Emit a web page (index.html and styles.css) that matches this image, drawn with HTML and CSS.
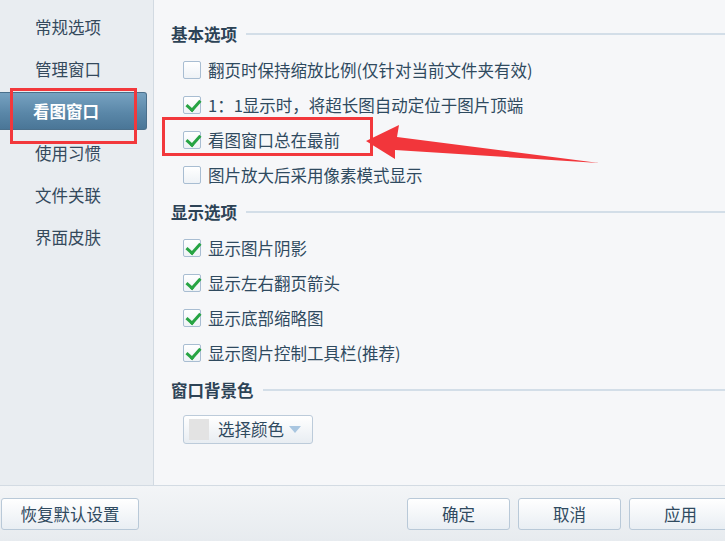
FILE: index.html
```html
<!DOCTYPE html>
<html lang="zh">
<head>
<meta charset="utf-8">
<link rel="stylesheet" href="styles.css">
</head>
<body>
<div class="window">
  <div class="main">
    <nav class="sidebar">
      <div class="nav-item">常规选项</div>
      <div class="nav-item">管理窗口</div>
      <div class="nav-item active">看图窗口</div>
      <div class="nav-item">使用习惯</div>
      <div class="nav-item">文件关联</div>
      <div class="nav-item">界面皮肤</div>
    </nav>
    <section class="content">
      <div class="heading first"><span>基本选项</span><i class="rule"></i></div>
      <div class="opt"><span class="cb"></span>翻页时保持缩放比例(仅针对当前文件夹有效)</div>
      <div class="opt"><span class="cb on"></span>1：1显示时，将超长图自动定位于图片顶端</div>
      <div class="opt"><span class="cb on"></span>看图窗口总在最前</div>
      <div class="opt"><span class="cb"></span>图片放大后采用像素模式显示</div>

      <div class="heading"><span>显示选项</span><i class="rule"></i></div>
      <div class="opt"><span class="cb on"></span>显示图片阴影</div>
      <div class="opt"><span class="cb on"></span>显示左右翻页箭头</div>
      <div class="opt"><span class="cb on"></span>显示底部缩略图</div>
      <div class="opt"><span class="cb on"></span>显示图片控制工具栏(推荐)</div>

      <div class="heading"><span>窗口背景色</span><i class="rule"></i></div>
      <div class="color-row">
        <button class="color-btn"><span class="swatch"></span><span class="color-label">选择颜色</span><span class="tri"></span></button>
      </div>
    </section>
  </div>
  <footer class="bottom">
    <button class="btn reset">恢复默认设置</button>
    <div class="actions">
      <button class="btn">确定</button>
      <button class="btn">取消</button>
      <button class="btn">应用</button>
    </div>
  </footer>

  <div class="mark mark-nav"></div>
  <div class="mark mark-opt"></div>
  <svg class="arrow" width="725" height="541" viewBox="0 0 725 541">
    <polygon points="366,141 399,125 397,137 599,163 395,150 395,159" fill="#f2363b"/>
  </svg>
</div>
</body>
</html>
```
FILE: styles.css
```css
* { box-sizing: border-box; }
html, body { margin: 0; padding: 0; }
body {
  width: 725px;
  height: 541px;
  overflow: hidden;
  font-family: "Noto Sans CJK SC", "Noto Sans", sans-serif;
  color: #2f4a5f;
  background: #f6f7f9;
}
.window {
  position: relative;
  width: 725px;
  height: 541px;
  display: flex;
  flex-direction: column;
}
.main {
  display: flex;
  height: 486px;
  border-bottom: 1px solid #d3dbe3;
}
.sidebar {
  width: 154px;
  flex: none;
  background: #e9edf1;
  border-right: 1px solid #d2dae2;
  padding-top: 8px;
  display: flex;
  flex-direction: column;
  gap: 4px;
}
.nav-item {
  height: 38px;
  line-height: 38px;
  padding-left: 35px;
  font-size: 16.5px;
  color: #34495c;
}
.nav-item.active {
  width: 147px;
  padding-left: 33px;
  color: #ffffff;
  font-weight: bold;
  background: linear-gradient(#77a2c1, #5a87a8 55%, #4a7697);
  border: 1px solid #4a6f8b;
  border-left: none;
  border-radius: 0 3px 3px 0;
  line-height: 36px;
}
.content {
  flex: 1;
  padding: 18px 0 0 17px;
  display: flex;
  flex-direction: column;
}
.heading {
  height: 32px;
  display: flex;
  align-items: center;
  gap: 9px;
  font-size: 16.5px;
  font-weight: bold;
  color: #2d4356;
  margin-top: 3.5px;
  margin-bottom: 2.5px;
}
.heading.first { margin-top: 0; }
.rule {
  flex: 1;
  height: 2px;
  background: #d3dee8;
}
.opt {
  height: 35px;
  display: flex;
  align-items: center;
  padding-left: 12px;
  font-size: 16.5px;
  color: #2f4a5f;
}
.cb {
  width: 18px;
  height: 18px;
  margin-right: 7px;
  border: 1px solid #a8bdd2;
  border-radius: 2px;
  background: linear-gradient(#ffffff, #eef2f6);
  position: relative;
}
.cb.on::after {
  content: "";
  position: absolute;
  left: 5px;
  top: 0px;
  width: 6px;
  height: 11px;
  border: solid #27a443;
  border-width: 0 3px 3px 0;
  transform: rotate(42deg);
}
.color-row {
  padding-left: 12px;
  margin-top: 6px;
}
.color-btn {
  width: 130px;
  height: 29px;
  display: flex;
  align-items: center;
  padding: 0 0 0 5px;
  border: 1px solid #bccbda;
  border-radius: 3px;
  background: linear-gradient(#ffffff, #e8edf2);
  font-family: inherit;
  font-size: 16.5px;
  color: #2f4a5f;
}
.swatch {
  width: 20px;
  height: 21px;
  background: #e3e3e3;
  margin-right: 9px;
}
.tri {
  width: 0;
  height: 0;
  margin-left: 5px;
  border-left: 6px solid transparent;
  border-right: 6px solid transparent;
  border-top: 7px solid #a9c6e0;
}
.bottom {
  flex: 1;
  display: flex;
  align-items: center;
  justify-content: space-between;
  background: linear-gradient(#f3f5f7, #e7ebef);
  padding-top: 1px;
}
.actions {
  display: flex;
  gap: 8px;
  margin-right: -7px;
}
.btn {
  width: 103px;
  height: 32px;
  border: 1px solid #b9c9d8;
  border-radius: 3px;
  background: linear-gradient(#ffffff, #e9eef3);
  font-family: inherit;
  font-size: 16.5px;
  color: #2f4a5f;
  padding: 0;
}
.btn.reset {
  width: 138px;
  margin-left: 1px;
}
.mark {
  position: absolute;
  border: 3px solid #f2383c;
}
.mark-nav {
  left: 10px;
  top: 88px;
  width: 127px;
  height: 56px;
}
.mark-opt {
  left: 162px;
  top: 117px;
  width: 211px;
  height: 39px;
}
.arrow {
  position: absolute;
  left: 0;
  top: 0;
  pointer-events: none;
}
```
